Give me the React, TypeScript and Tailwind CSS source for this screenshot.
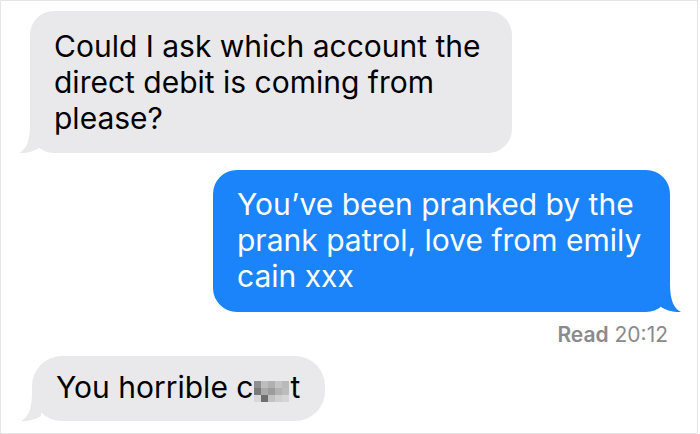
import React from "react";

const MOSAIC = [
  "bg-[#8f8f8f]", "bg-[#bdbdbd]", "bg-[#b0b0b0]", "bg-[#c4c4c4]", "bg-[#b9b9b9]",
  "bg-[#7a7a7a]", "bg-[#a9a9a9]", "bg-[#9c9c9c]", "bg-[#b2b2b2]", "bg-[#bcbcbc]",
  "bg-[#d8d8d8]", "bg-[#6e6e6e]", "bg-[#c2c2c2]", "bg-[#cfcfcf]", "bg-[#d5d5d5]",
];

function Tail({ side, color }: { side: "left" | "right"; color: string }) {
  const pos = side === "left" ? "left-[-12px]" : "right-[-12px] -scale-x-100";
  return (
    <svg
      className={`absolute bottom-0 ${pos}`}
      width="24"
      height="28"
      viewBox="0 0 24 28"
    >
      <path d="M12 0 C12 16 8 25 1 28 C8 28.5 15 26.5 21 23 L21 0 Z" fill={color} />
    </svg>
  );
}

// pixelated blur over the rude word
function Censored() {
  return (
    <span className="inline-block overflow-hidden align-[-4px] mx-[1px] w-[35px] h-[21px]">
      <span className="flex flex-wrap w-[35px] h-[21px]">
        {MOSAIC.map((c, i) => (
          <span key={i} className={`block w-[7px] h-[7px] ${c}`} />
        ))}
      </span>
    </span>
  );
}

export default function App() {
  return (
    <div
      className="w-[698px] h-[434px] border border-[#e4e4e4] bg-white overflow-hidden flex flex-col"
      style={{ fontFamily: "Inter, 'Liberation Sans', sans-serif" }}
    >
      {/* incoming */}
      <div className="relative ml-[29px] mt-[10px] w-[482px] rounded-[24px] bg-[#e9e9eb] pl-[24px] pt-[17px] pb-[17px] text-[30px] leading-[36px] text-black">
        <span className="block whitespace-nowrap">Could I ask which account the</span>
        <span className="block whitespace-nowrap">direct debit is coming from</span>
        <span className="block whitespace-nowrap">please?</span>
        <Tail side="left" color="#e9e9eb" />
      </div>

      {/* outgoing */}
      <div className="relative self-end mr-[27px] mt-[17px] w-[457px] rounded-[24px] bg-[#1b84fb] pl-[24px] pt-[16px] pb-[18px] text-[30px] leading-[36px] text-white">
        <span className="block whitespace-nowrap">You’ve been pranked by the</span>
        <span className="block whitespace-nowrap">prank patrol, love from emily</span>
        <span className="block whitespace-nowrap">cain xxx</span>
        <Tail side="right" color="#1b84fb" />
      </div>

      <div className="self-end mr-[29px] mt-[11px] text-[21px] leading-[24px] text-[#8a8a8e]">
        <span className="font-semibold">Read</span> 20:12
      </div>

      {/* incoming */}
      <div className="relative ml-[31px] mt-[9px] w-[293px] rounded-[30px] bg-[#e9e9eb] pl-[24px] pt-[13px] pb-[16px] text-[30px] leading-[36px] text-black">
        <span className="block whitespace-nowrap">
          You horrible c<Censored />t
        </span>
        <Tail side="left" color="#e9e9eb" />
      </div>
    </div>
  );
}
